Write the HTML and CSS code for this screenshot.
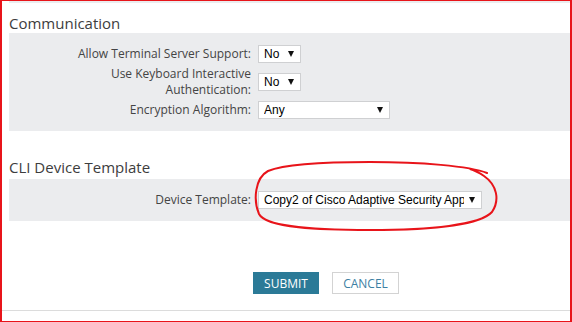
FILE: index.html
```html
<!DOCTYPE html>
<html lang="en">
  <head>
    <meta charset="UTF-8" />
    <meta name="viewport" content="width=device-width, initial-scale=1.0" />
    <title>Device Settings</title>
    <link rel="stylesheet" href="styles.css">
  </head>
  <body>
    <div class="frame">
      <div class="content">
        <div class="panel-tail"></div>

        <h2 class="section-title">Communication</h2>
        <div class="panel">
          <div class="field">
            <label class="field-label">Allow Terminal Server Support:</label>
            <div class="select select-short">
              <span class="select-value">No</span>
              <span class="select-arrow"></span>
            </div>
          </div>
          <div class="field">
            <label class="field-label">Use Keyboard Interactive Authentication:</label>
            <div class="select select-short">
              <span class="select-value">No</span>
              <span class="select-arrow"></span>
            </div>
          </div>
          <div class="field">
            <label class="field-label">Encryption Algorithm:</label>
            <div class="select select-medium">
              <span class="select-value">Any</span>
              <span class="select-arrow"></span>
            </div>
          </div>
        </div>

        <h2 class="section-title section-title-second">CLI Device Template</h2>
        <div class="panel">
          <div class="field">
            <label class="field-label">Device Template:</label>
            <div class="select select-long">
              <span class="select-value">Copy2 of Cisco Adaptive Security Appliance</span>
              <span class="select-arrow"></span>
            </div>
          </div>
        </div>

        <div class="actions">
          <button class="btn btn-submit">Submit</button>
          <button class="btn btn-cancel">Cancel</button>
        </div>
      </div>
      <div class="footer-line"></div>
    </div>

    <!-- red marker ring drawn over the template field -->
    <svg class="annotation" width="572" height="322" viewBox="0 0 572 322">
      <path
        d="M487 173 C470 166 420 162 370 162 C320 162 285 164 268 171 C255 178 253 200 259 214 C266 228 320 230 370 230 C430 230 480 225 492 212 C500 200 497 185 484 176 C478 172 474 170 470 169"
        fill="none"
        stroke="#e8141a"
        stroke-width="2"
        stroke-linecap="round"
      />
    </svg>
  </body>
</html>
```

FILE: styles.css
```css
* {
  box-sizing: border-box;
}

body {
  margin: 0;
  position: relative;
  background-color: #ffffff;
  font-family: "Open Sans", "Liberation Sans", sans-serif;
  color: #444444;
}

.frame {
  width: 572px;
  height: 322px;
  border-style: solid;
  border-color: #e8141a;
  border-width: 1px 2px 1px 2px;
  overflow: hidden;
}

.content {
  padding-left: 7px;
}

.panel-tail {
  height: 2px;
  background-color: #ebecee;
}

.section-title {
  margin: 10px 0 0 0;
  font-size: 15px;
  line-height: 20px;
  font-weight: 400;
  color: #3d3d3d;
}

.section-title-second {
  margin-top: 26px;
  margin-bottom: 2px;
}

.panel {
  display: flex;
  flex-direction: column;
  gap: 3px;
  padding: 12px 0;
  background-color: #ebecee;
}

.field {
  display: grid;
  grid-template-columns: 242px auto;
  column-gap: 7px;
  align-items: center;
}

.field-label {
  justify-self: end;
  max-width: 180px;
  text-align: right;
  font-size: 12px;
  line-height: 16px;
  color: #444444;
}

.select {
  display: flex;
  align-items: center;
  height: 18px;
  padding: 0 6px 0 5px;
  border: 1px solid #cfd0d2;
  background-color: #ffffff;
  font-family: "Liberation Sans", Arial, sans-serif;
  font-size: 12px;
  color: #000000;
}

.select-short {
  width: 43px;
}

.select-medium {
  width: 132px;
}

.select-long {
  width: 224px;
}

.select-value {
  flex: 1;
  overflow: hidden;
  white-space: nowrap;
  margin-right: 5px;
}

.select-arrow {
  width: 0;
  height: 0;
  border-left: 3px solid transparent;
  border-right: 3px solid transparent;
  border-top: 6px solid #111111;
}

.actions {
  display: flex;
  gap: 13px;
  margin-top: 51px;
  padding-left: 244px;
}

.btn {
  height: 22px;
  padding: 0;
  font-family: "Open Sans", "Liberation Sans", sans-serif;
  font-size: 12px;
  text-transform: uppercase;
  cursor: pointer;
}

.btn-submit {
  width: 66px;
  border: none;
  background-color: #2b7a97;
  color: #ffffff;
}

.btn-cancel {
  width: 67px;
  border: 1px solid #d3d3d3;
  background-color: #ffffff;
  color: #3c7fa3;
}

.footer-line {
  height: 1px;
  margin-top: 16px;
  background-color: #dcdcdc;
}

.annotation {
  position: absolute;
  top: 0;
  left: 0;
  pointer-events: none;
}
```
